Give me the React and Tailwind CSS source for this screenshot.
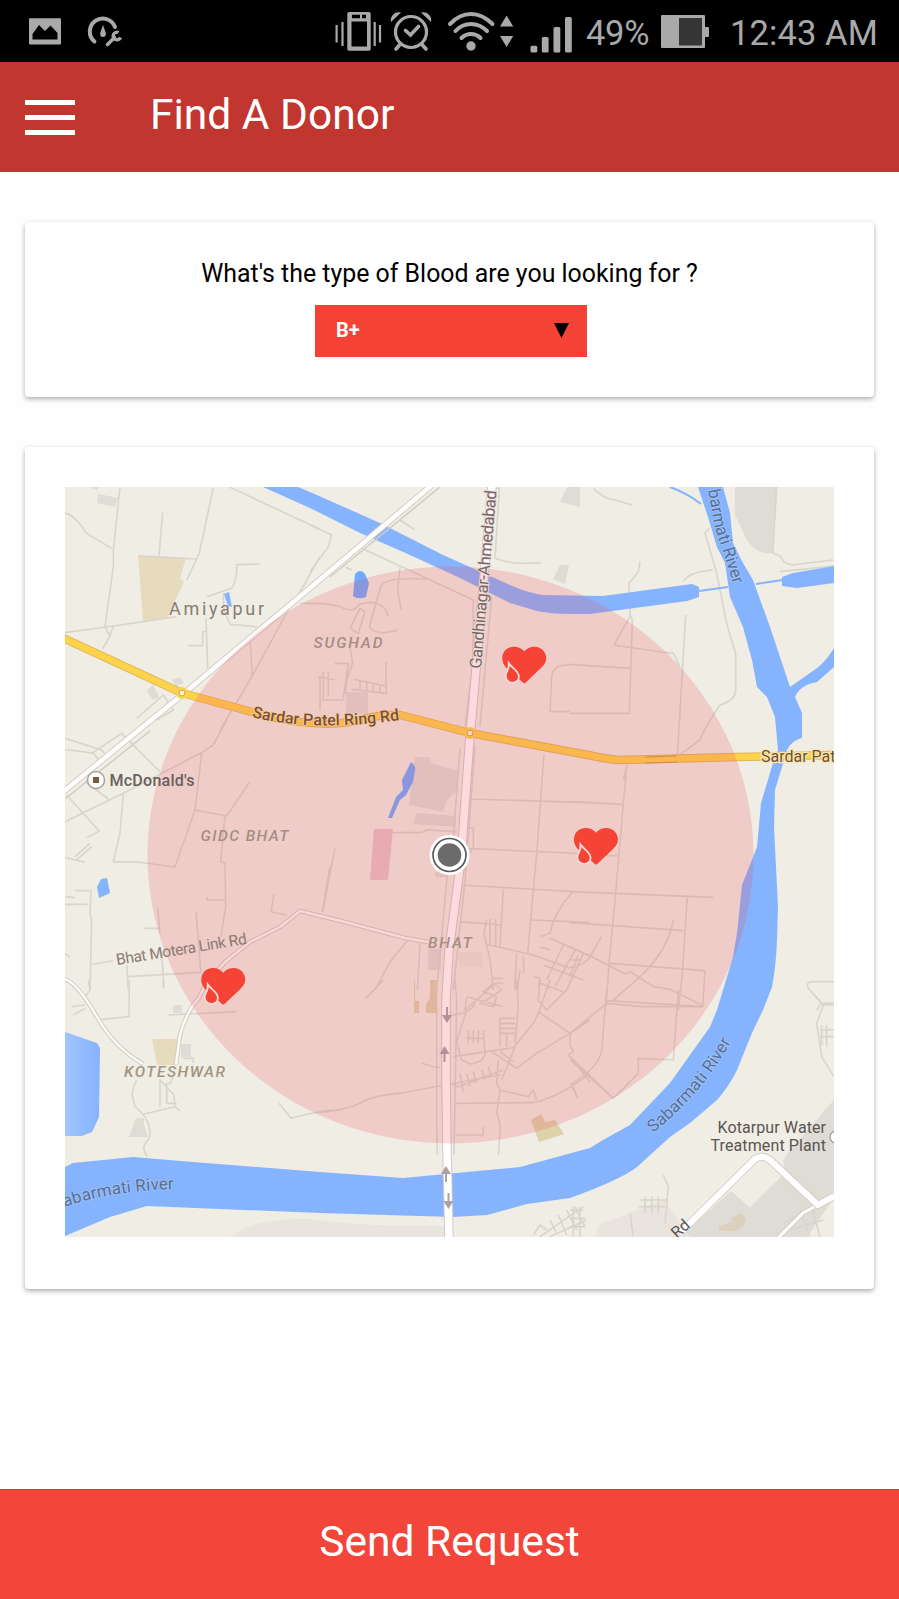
import React from "react";

const WATER = "#86b3fd";

function StatusBar() {
  return (
    <div className="flex h-[62px] shrink-0 items-center bg-black text-[#a9a9a9]">
      <svg className="ml-7 h-[62px] w-24" viewBox="28 0 96 62" fill="currentColor">
        <path fillRule="evenodd" d="M30 18.3h30q1 0 1 1V43.500q0 1-1 1H30q-1 0-1-1V19.300q0-1 1-1ZM32.500 34v5.500h25V33l-7-7.500-5.500 5.500-6-6Z" />
        <path d="M94.500 41.500A13 13 0 1 1 115 27" fill="none" stroke="currentColor" strokeWidth="4" strokeLinecap="round" />
        <path d="M103 25l-3 8.500q.3 3.500 3 3.500t3-3.500Z" />
        <path d="M107.500 44.500l7-7" stroke="currentColor" strokeWidth="3.500" strokeLinecap="round" />
        <path d="M118.500 32.500a3.800 3.800 0 1 0 2 5" fill="none" stroke="currentColor" strokeWidth="3.400" />
      </svg>
      <svg className="ml-auto h-[62px] w-[246px]" viewBox="332 0 246 62" fill="currentColor">
        <path d="M336.600 25v17.500M342.500 22v24M374.700 22v24M380 25v17.500" stroke="currentColor" strokeWidth="2.200" />
        <path fillRule="evenodd" d="M349 12h20q1.700 0 1.700 1.700V49q0 1.800-1.700 1.800H349q-1.700 0-1.700-1.800V13.700q0-1.700 1.700-1.700ZM351.500 21.500V46.500h15.500V21.500ZM352 14.800v3.400h8v-3.400ZM362 14.800v3.400h4v-3.400Z" />
        <g fill="none" stroke="currentColor" strokeLinecap="round">
          <circle cx="411" cy="32" r="15.500" strokeWidth="3.200" />
          <path d="M405.500 30.500l5 4.500 8-8.500" strokeWidth="3.600" />
          <path d="M400 44.500l-4 4.500M422 44.500l4 4.500" strokeWidth="3.600" />
        </g>
        <path d="M391 22q-1-4 2-7.300t8-2.200ZM431 22q1-4-2-7.300t-8-2.200Z" />
        <g fill="none" stroke="currentColor" strokeWidth="4" strokeLinecap="round">
          <path d="M450 24Q459.500 14 471 14T492.500 24" />
          <path d="M455.500 31Q462 24 471 24T487 31" />
          <path d="M461.500 38Q465.500 34 471 34T480.500 38" />
        </g>
        <circle cx="471" cy="46" r="4.700" />
        <path d="M506.600 15.500l6.600 11h-13.200ZM506.600 47l-6.600-11h13.200Z" />
        <rect x="530.500" y="45.700" width="6.800" height="6.800" rx="1.500" />
        <rect x="541.800" y="37" width="6.800" height="15.500" rx="1.500" />
        <rect x="553.500" y="27" width="6.800" height="25.500" rx="1.500" />
        <rect x="565" y="17" width="6.800" height="35.500" rx="1.500" />
      </svg>
      <span className="ml-2 w-[64px] whitespace-nowrap pt-1 text-[34.5px] leading-none tracking-[-0.3px]">49%</span>
      <svg className="ml-[11px] h-[62px] w-[49px]" viewBox="661 0 49 62">
        <rect x="661" y="15" width="44" height="33" rx="1" fill="currentColor" />
        <rect x="704" y="27" width="5" height="10" rx="1" fill="currentColor" />
        <rect x="679" y="18" width="23" height="27.500" fill="#363636" />
      </svg>
      <span className="ml-5 mr-[21px] w-[148px] whitespace-nowrap pt-1 text-[34.5px] leading-none tracking-[0.1px]">12:43 AM</span>
    </div>
  );
}

function HeartMarker({ x, y }) {
  return (
    <g transform={`translate(${x} ${y}) scale(.3333)`}>
      <path
        d="M66 14C55 1 42-1 32 0 12 2 0 16 0 35 0 50 8 60 16 68L60 106Q66 113 72 106L118 62C128 52 132 44 132 33 130 12 114 0 98 0 84 0 73 5 66 14Z"
        fill="#f54336"
      />
      <path
        d="M22 57C29 66 47 76 47 90 47 100 39 105 30 105 20 105 13 98 13 88 13 78 22 70 22 57Z"
        fill="#f54336"
        stroke="#f4dbd7"
        strokeWidth="11"
        paintOrder="stroke"
      />
    </g>
  );
}

function Lanes({ x, y, d, ...rest }) {
  return (
    <g transform={`translate(${x} ${y}) scale(.33333)`}>
      <path d={d} fill="none" stroke="#d9d5cd" strokeWidth="4.800" strokeLinejoin="round" {...rest} />
    </g>
  );
}

function Casing({ d, width, color, edge }) {
  return (
    <g fill="none" strokeLinejoin="round">
      <path d={d} stroke={edge} strokeWidth={width + 2} />
      <path d={d} stroke={color} strokeWidth={width} />
    </g>
  );
}

function Arrow({ x, y, down }) {
  return (
    <path
      transform={`translate(${x} ${y}) scale(1 ${down ? -1 : 1})`}
      d="M-1 8V0H-5L0-8L5 0H1V8Z"
      fill="#aaa0a8"
    />
  );
}

function DonorMap() {
  return (
    <svg className="block h-[750px] w-[769px]" viewBox="65 487 769 750" fontFamily="Roboto, sans-serif">
      <defs>
        <path id="river-ne" d="M708 490L714 524L724 555L735 590" />
        <path id="river-se" d="M653 1133Q705 1092 734 1036" />
        <path id="river-sw" d="M65 1207Q115 1189 190 1189" />
        <path id="ring-road" d="M252 717Q315 733 406 719" />
        <path id="highway" d="M481 669L497 487" />
        <linearGradient id="lake" x1="0" x2="1">
          <stop offset="0" stopColor="#a0c5ff" />
          <stop offset="1" stopColor={WATER} />
        </linearGradient>
      </defs>
      <rect x="65" y="487" width="769" height="750" fill="#efede4" />

      {/* Built-up areas and parks */}
      <g fill="#dfdbd5">
        <path d="M98 494L118 498 115 507 97 503ZM88 487h10v3ZM567 487h13v20L560 502ZM553 579l7-14 9 0-4 19ZM735 487H777L772 553Q757 555 747 540L735 515Z" />
        <path d="M415 757h15l1 6 27 8v20q-13 7-15 21l-34-7ZM417 813l39 3v11l-43-3ZM435 872h13v5h-13ZM346 692h22v22h-22Z" />
        <path d="M428 949h13v21h-13ZM173 1005h9v8h-9ZM181 1044h10v13h-10ZM136 1118h8v7l4 12h-19Z" />
        <path d="M834 1100V1198L807 1237H680L731 1191 750 1208 790 1150Z" />
        <path d="M147 691l6-7 6 13-6 3ZM172 680l8-3 4 6-8 3Z" />
      </g>
      <path d="M459 952h23v15h-23Z" fill="#e9e5de" />
      <path d="M732 1191L780 1155Q788 1165 780 1178L750 1207Z" fill="#efede4" />
      <path d="M232 1237Q250 1218 310 1219 360 1227 450 1226V1237ZM600 1224L664 1200 690 1237H595Z" fill="#e9e5de" />
      <path d="M740 1213l6 5q-1 10-10 13h-17v-5l14-4-2-4Z" fill="#dcd0bf" />
      <path d="M138 555L186 558 180 578 184 582 167 618 143 621ZM152 1039h27l-2 26h-20Z" fill="#e6dbbc" />
      <path d="M374 829h19l-5 51H370Z" fill="#e6c3c9" />
      <path d="M414 980h22v33h-22ZM531 1120l10-6 4 8 10-2 9 14-25 8Z" fill="#dcd3ab" />
      <path d="M415 980h15v18l-4 6v9h-7V1001h-4Z" fill="#efede4" />

      {/* Minor streets */}
      <Lanes x={60} y={480} d="M180 22L160 210 160 260 135 440 150 470 127 507M15 100Q40 100 80 160L155 205M308 98L297 227M460 22L418 220 380 300M235 228L410 237M15 458L160 438 350 410M160 438L148 470M510 22L780 148M600 252L530 254Q532 300 515 325L440 350M490 340L492 390 510 433 590 440M438 415L443 565M385 497H428V455H442M570 480L577 590M780 230L715 345 690 380 570 600 480 750M720 370H780M230 715L310 645 340 690 290 720" />
      <Lanes x={310} y={480} d="M0 135L65 165 55 200 0 275M270 120L315 150M155 205L490 360 488 560 465 740M555 25L568 25 555 235Q600 255 692 248M108 262L125 270M545 350L510 740M270 262L263 330 273 388M350 297Q225 290 212 320L178 440Q200 470 262 450M0 370Q80 370 105 387 135 395 145 375 220 350 235 410M150 385L120 445 145 460 165 395ZM120 500L128 550 110 600 107 640M30 590L30 690M35 660L105 660M25 590L75 600M40 575V655M75 550H115L100 655M55 575V650M130 598L228 618 230 640 125 628M150 600V630M170 604V635M190 610V638M210 614V640M228 545V618" />
      <Lanes x={310} y={480} d="M780 555H760Q728 560 725 590L720 695H780" />
      <Lanes x={570} y={480} d="M70 25Q100 55 135 60L187 75M210 245L205 275 177 310 180 405 187 420 178 700H0M180 410L132 495 280 517 310 520 330 560M0 553L180 565M347 405L322 830 390 780Q405 740 450 675 495 660 497 635L497 520Q470 440 460 380L440 280 405 160 418 145M340 305Q355 275 430 270M620 22L608 220Q635 225 640 245L665 255 790 240M630 275L792 258M170 860L160 900" />
      <Lanes x={60} y={720} d="M15 55L125 90 145 115M15 90H30L100 100 125 130M0 5M20 225L118 333 80 353M15 305L190 220 430 95 460 75 500 0M75 185L145 237M220 75L300 155M95 100L185 40 220 75M190 220L180 340 160 425 240 427 345 441 405 270 425 100M405 270L500 288 570 185M495 290L482 425 495 430 497 560 483 650M440 530L442 540H495M45 410L90 370M50 420L95 380M15 412L75 427M45 512H93L90 580 95 600 90 810M15 530L45 533M15 553H85M293 563L300 640M252 625H298M408 575L423 760M95 733L160 722M200 735L205 810M205 770L420 757M305 700L312 805M642 522L633 575 680 585M810 440L787 575M15 700L30 712" />
      <Lanes x={320} y={720} d="M420 85L400 350 385 420M465 80L435 480 400 810M455 237L810 248M672 105L650 400 623 700M440 385L810 402M425 495L810 518M550 508L540 680M420 605L545 615M215 338H305L320 330 410 335M435 320L460 325 460 380 450 400M45 385L8 575M262 662L210 725 165 810M300 670L292 810M635 600L810 608M755 518Q700 580 690 640L660 650M690 655L810 708M660 680L690 690M500 600L492 640 510 720 520 810M510 597V670M527 597V680M495 672L640 705 750 745M590 700L585 810M610 710L612 760M730 675L680 780M765 690L705 800M790 700L740 810M670 735L790 780M600 750L592 810M520 775H550M525 790H550M640 770L660 775 655 800M385 430L350 810" />
      <Lanes x={570} y={760} d="M0 125L158 133M170 15L137 400 118 600 108 740M0 280L145 288M0 395L430 412M0 488L340 512M352 412L337 640 325 750M310 480Q295 570 210 650L125 725M0 560L85 600 165 642 180 635 250 680 300 688 395 735M120 610L405 632 398 740 110 722M95 530L60 590Q40 620 0 622M25 585L0 650M30 600H0M792 665H730Q705 665 715 685L755 730 740 750M755 730H792" />
      <Lanes x={60} y={980} d="M208 0L207 110 125 118M85 0L90 30 75 50M35 80L75 75M40 105L75 85M325 105L530 95M370 235H400V250M230 300Q210 340 220 360L225 380 250 403 345 380 342 345 300 300 300 380M320 310V370H350M340 290L330 310 315 315M250 403Q280 450 265 480 240 500 262 530M345 380L360 392M657 370L693 415 740 403 810 390M310 0V25" />
      <Lanes x={320} y={980} d="M190 0L138 55M0 397Q80 390 120 370 160 345 240 340L540 285M305 250L345 262H360M350 0V440L352 525M405 0L410 60 402 525M405 370L640 368Q720 350 810 280M408 465H490V440M400 315L415 320 550 270M420 280L430 335M440 283L450 320M460 275L470 310M485 270L495 300M505 260L512 285M440 90L410 185 425 240 455 253 485 240 495 225 490 150M440 55L435 90 470 60 520 15M440 175H490M445 150V190M460 150V190M475 150V190M395 105Q450 100 465 70M440 50L550 80M400 230L580 203 640 130 655 100 690 0M590 0L595 80 585 190M540 115V200M540 115H585M540 130H585M540 145H585M540 160H585M560 160V200M585 200L545 300M535 240L530 310 540 330 530 400Q545 440 540 460L535 525M540 215L580 245M515 215L590 265 650 220 750 160 810 120M655 95L750 160M750 160L750 195 760 215 745 225 810 305M660 0L655 60 680 90 740 30M660 10L730 35M540 330L625 350 640 330 650 360M755 320L775 355M520 10L545 30 500 60 480 70 520 80 530 50 490 35Z" />
      <Lanes x={570} y={990} d="M110 0L95 180Q90 230 0 285M0 200L130 325 205 250V205L310 210 325 0M0 130L110 40 220 50 395 50M0 210L130 325M10 290L20 320M720 0L760 45 740 100 755 200 792 260M760 45H792M755 105V165M770 105V170M750 120H792M750 140H792M280 555L295 590 285 700M210 630H290M205 650H285M225 620V670M245 620V670M265 620V670M180 670L190 740M0 660H40M0 685H45M0 710H45M10 650V740M30 650V740M640 700L720 655M660 720L760 690M690 660L720 740M725 650L750 740" />
      <Lanes x={320} y={980} d="M640 765L660 735 680 750M660 770L790 680M690 770L800 720M690 720L710 760M715 705L740 765M740 690L770 750M765 680L795 740" />

      {/* Water */}
      <g fill={WATER}>
        <path d="M263 487H298L310 492 380 523 443 555 470 567 510 585Q528 593 543 595L603 596 692 584 699 587V597L687 601 590 614H570Q550 614 537 611L510 603 460 578 410 555 360 533 310 508Z" />
        <path d="M782 577L793 573 834 566V583L797 588 782 586Z" />
        <path d="M698 487H723L730 513 733 543 743 563 753 580 770 627 790 687 810 673Q824 665 834 648V667L817 682Q800 685 795 697L802 713 802 738Q792 740 787 750L782 767 775 790 774 827 778 907 777 940Q776 966 772 987L763 1010 752 1033 737 1070Q730 1085 717 1100L690 1123 670 1137 637 1167Q620 1180 570 1198L527 1204 487 1215 453 1217 320 1213 147 1206 110 1217 65 1236V1167L73 1163 133 1157 193 1162 320 1172 403 1178 520 1167 590 1148 603 1140 630 1125 670 1083 710 1027 717 1010 733 957 737 933 742 885 757 847 761 803 773 763 778 750 775 717 767 697 757 687 752 660 743 627 730 597 725 563 717 547 708 517Z" />
        <path d="M224 594L229 592 232 607 228 606ZM97 887L101 879 107 878 110 893 99 898Z" />
      </g>
      <path d="M65 1032L97 1043 100 1048 99 1117 92 1132 82 1136H65Z" fill="url(#lake)" />
      <path d="M670 487Q687 493 701 504M699 591L728 587M756 584L783 580" fill="none" stroke={WATER} strokeWidth="2" />
      <path d="M355 574Q360 568 365 574L369 583 366 597Q358 600 353 596ZM411 762Q416 766 415 770L413 782 406 795 400 800 392 818H388L396 797 403 790 402 780Z" fill="#70aaff" />

      {/* Roads */}
      <Casing d="M65 979Q78 984 97 1017 115 1048 143 1064" width={2.500} color="#fbfaf7" edge="#d0ccc4" />
      <Casing d="M176 1064L180 1035Q186 1012 199 998L205 985 225 962 250 942 280 927 300 911 345 922 405 938 428 942" width={2.500} color="#fbfaf7" edge="#d0ccc4" />
      <path d="M440 487L330 577M150 731L65 799" stroke="#d0ccc4" strokeWidth="1.500" />
      <Casing d="M432 485L310 588 182 695 145 725 63 792" width={4.500} color="#fffefd" edge="#d3cfc7" />
      <Casing d="M818 1205L803 1213 779 1237" width={3} color="#fff" edge="#d3cfc8" />
      <Casing d="M680 1233L755 1159Q762 1154 770 1160L818 1205 834 1196" width={6} color="#fff" edge="#d3cfc8" />
      <Casing d="M492 485L482 600 472 715 470 735 461 860 449 950 446 1000 446 1080 447 1150 449 1240" width={7.500} color="#fff" edge="#cfcac6" />
      <Casing d="M63 638L182 693 252 712Q310 728 350 722 385 713 400 715L470 733 588 755Q605 759 620 760L737 757 836 755" width={6.500} color="#fdd34b" edge="#e0b458" />
      <circle cx="182" cy="693" r="6" fill="#fdd34b" />
      <circle cx="470" cy="733" r="6" fill="#fdd34b" />
      <path d="M645 757l32-1M645 763l32-1" stroke="#c99a4a" strokeWidth="1" />
      <circle cx="182" cy="693" r="3" fill="#fff4ce" stroke="#c9a35a" />
      <circle cx="470" cy="733" r="3" fill="#fff4ce" stroke="#c9a35a" />
      <Arrow x={447} y={1015} down />
      <Arrow x={444.500} y={1054} />
      <Arrow x={446} y={1174} />
      <Arrow x={448.500} y={1201} down />

      {/* Search radius */}
      <ellipse cx="450.500" cy="855" rx="303" ry="288.500" fill="#f04d5c" fillOpacity=".2" />

      {/* Place labels */}
      <g fill="#878075" strokeWidth="0" paintOrder="stroke">
        <text x="169" y="615" fontSize="18" textLength="95" fill="#857d72">Amiyapur</text>
        <g fontSize="15.500" fontStyle="italic" fontWeight="500">
          <text x="313.500" y="647.500" textLength="69" fill="#a68d83">SUGHAD</text>
          <text x="200.500" y="841" textLength="88" fill="#a68d83">GIDC BHAT</text>
          <text x="428" y="948" textLength="44" fill="#a68d83">BHAT</text>
          <text x="124" y="1076.500" textLength="101" fill="#a1957f">KOTESHWAR</text>
        </g>
        <text x="109.500" y="785.500" fontSize="16" fontWeight="500" textLength="85" fill="#6a605d">McDonald's</text>
        <g fontSize="16" fill="#5b5452">
          <text x="717.500" y="1132.500" textLength="108.500">Kotarpur Water</text>
          <text x="710.500" y="1151" textLength="115.500">Treatment Plant</text>
          <text transform="translate(677 1239) rotate(-42)">Rd</text>
        </g>
        <text transform="translate(117 965) rotate(-9.200)" fontSize="15.500" textLength="132" fill="#8c7b73">Bhat Motera Link Rd</text>
        <g fontSize="16" fill="#7b4f37" strokeWidth="1.500">
          <text textLength="149" fontWeight="500" stroke="#f5cf9f"><textPath href="#ring-road">Sardar Patel Ring Rd</textPath></text>
          <text x="761" y="761.500" stroke="#fbe7b0" strokeWidth="2.500" fill="#6b5236">Sardar Patel</text>
        </g>
        <text fontSize="16.500" fill="#75696a" stroke="#f1dcd7" strokeWidth="1.500" textLength="179"><textPath href="#highway">Gandhinagar-Ahmedabad</textPath></text>
        <g fontSize="17" fill="#566f93" stroke="#a3c4fb" strokeWidth="1.500">
          <text textLength="98"><textPath href="#river-ne">barmati River</textPath></text>
          <text textLength="121"><textPath href="#river-se">Sabarmati River</textPath></text>
          <text textLength="111"><textPath href="#river-sw">abarmati River</textPath></text>
        </g>
      </g>
      <circle cx="96" cy="780" r="8.500" fill="#fff" stroke="#aaa39c" strokeWidth="1.500" />
      <rect x="93" y="777" width="6" height="6" fill="#795c45" />
      <circle cx="836" cy="1137" r="6" fill="#fff" stroke="#aaa39c" strokeWidth="1.500" />

      {/* Current position and donors */}
      <circle cx="449.500" cy="855" r="20" fill="#fff" />
      <circle cx="449.500" cy="855" r="16.500" fill="#fff" stroke="#5b5b5b" strokeWidth="1.700" />
      <circle cx="449.500" cy="855" r="11.800" fill="#6b6b6b" />
      <HeartMarker x={502.300} y={646.700} />
      <HeartMarker x={574} y={828} />
      <HeartMarker x={201.300} y={968} />
    </svg>
  );
}

export default function App() {
  return (
    <div className="flex h-[1599px] w-[899px] flex-col bg-[#fefefe] font-['Roboto',sans-serif]">
      <StatusBar />
      <header className="flex h-[110px] shrink-0 items-center bg-[#c1362f] pl-[25px]">
        <button aria-label="Menu" className="mt-[1px] flex w-[50px] flex-col gap-[10px]">
          <span className="h-[5px] bg-white" />
          <span className="h-[5px] bg-white" />
          <span className="h-[5px] bg-white" />
        </button>
        <h1 className="ml-[75px] pb-[3px] text-[42.5px] leading-none text-white">Find A Donor</h1>
      </header>

      <main className="flex flex-1 flex-col gap-[50px] px-[25px] pt-[50px]">
        <section className="flex h-[175px] flex-col items-center rounded bg-white pt-9 shadow-[0_2px_5px_rgba(0,0,0,0.32)]">
          <p className="text-[24.9px] leading-8 text-black">What's the type of Blood are you looking for ?</p>
          <div className="ml-[3px] mt-[15px] flex h-[52px] w-[272px] items-center justify-between bg-[#f44336] pb-[2px] pl-[21px] pr-[18px]">
            <span className="text-[20px] font-bold leading-none text-white">B+</span>
            <svg className="h-[15px] w-[15px]" viewBox="0 0 15 15"><path d="M0 0H15L7.500 15Z" /></svg>
          </div>
        </section>
        <section className="flex h-[842px] flex-col items-center rounded bg-white pt-10 shadow-[0_2px_5px_rgba(0,0,0,0.32)]">
          <DonorMap />
        </section>
      </main>

      <button className="flex h-[110px] shrink-0 items-center justify-center border-t border-[#b9473c] bg-[#f14639] pb-[6px] text-[42.5px] text-white">
        Send Request
      </button>
    </div>
  );
}
